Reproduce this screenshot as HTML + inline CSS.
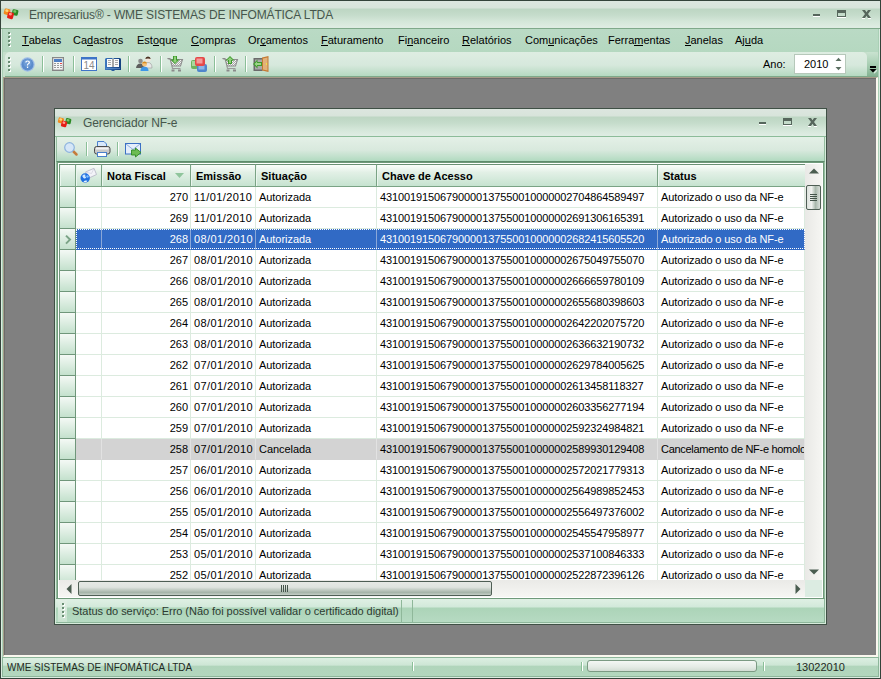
<!DOCTYPE html>
<html><head><meta charset="utf-8">
<style>
*{box-sizing:border-box;margin:0;padding:0}
html,body{width:881px;height:679px;overflow:hidden;background:#c6dfcc;font-family:"Liberation Sans",sans-serif;font-size:11px;color:#000}
.a{position:absolute}
svg{position:absolute;overflow:visible}
#frame{position:absolute;left:0;top:0;width:881px;height:679px;border:1px solid #34433a;box-shadow:inset 1px 1px 0 #dcece1,inset -1px -1px 0 #dcece1,inset 2px 2px 0 #a9cfb5,inset -2px -2px 0 #a9cfb5}
.tb{background:linear-gradient(#dce6df 0,#d8e4db 7px,#bdd6c3 8px,#c5dccb 14px,#d3e6d8 20px,#deece2 26px)}
#title{position:absolute;left:1px;top:1px;width:879px;height:28px;border-bottom:1px solid #7fa98a}
#title .t{position:absolute;left:28px;top:7px;font-size:12px;color:#46564c;letter-spacing:-0.13px}
#menubar{position:absolute;left:3px;top:29px;width:875px;height:23px;background:linear-gradient(#badac5,#b5d8c0)}
.mi{position:absolute;top:5px;font-size:11px;color:#000;white-space:nowrap}
.mi u{text-decoration:none;border-bottom:1px solid #000;line-height:10px;display:inline-block}
.grip{position:absolute;width:3px;height:15px}.grip i{position:absolute;left:0;width:2px;height:2px;background:#6a8e73;box-shadow:1px 1px 0 #fff}.grip i:nth-child(1){top:0}.grip i:nth-child(2){top:4px}.grip i:nth-child(3){top:8px}.grip i:nth-child(4){top:12px}
#toolbar{position:absolute;left:5px;top:52px;width:862px;height:25px;border-radius:5px 5px 0 0;background:linear-gradient(#deede2,#d6e8dc 55%,#b5d9c1);border-bottom:1px solid #7fa98a}
.sep{position:absolute;width:2px;border-left:1px solid #8bbf98;border-right:1px solid #fff}
#mdi{position:absolute;left:3px;top:77px;width:875px;height:580px;background:#808080;box-shadow:inset 1px 1px 0 #6c6c6a;border-top:1px solid #a59c89;border-left:1px solid #a59c89;border-bottom:2px solid #faf8ef;border-right:2px solid #faf8ef}
#status{position:absolute;left:2px;top:657px;width:877px;height:20px;background:linear-gradient(#dcefe2,#cde6d5 40%,#b0d5bb 45%,#b3d7be);border:1px solid #8db69a}
#child{position:absolute;left:54px;top:108px;width:773px;height:517px;border:1px solid #3f5045;background:#94bd9f;box-shadow:inset 1px 1px 0 #d6eadb,inset -1px -1px 0 #d6eadb}
#ctitle{position:absolute;left:55px;top:109px;width:771px;height:28px;border-bottom:1px solid #8cbc99}
#ctitle .t{position:absolute;left:28px;top:7px;font-size:12px;color:#46564c;letter-spacing:-0.1px}
#ctool{position:absolute;left:56px;top:137px;width:769px;height:25px;background:linear-gradient(#e4f0e7,#d8e9dd 55%,#b1dac0);border-bottom:1px solid #5f8a6c;border-left:1px solid #94bd9f;border-right:1px solid #94bd9f}
#grid{position:absolute;left:57px;top:162px;width:767px;height:437px;background:#fff;border:1px solid #6f9a7a;box-shadow:inset 0 0 0 1px #fff;overflow:hidden}
.hdr{position:absolute;top:164px;height:23px;background:linear-gradient(#fbfdfb,#e2f0e6 35%,#c6e3d0);border-top:1px solid #6a9074;border-right:1px solid #7aa385;border-bottom:1px solid #7aa385;box-shadow:inset 1px 0 0 #eaf6ee;font-weight:bold;padding:5px 0 0 5px;color:#000;white-space:nowrap}
#rows{position:absolute;left:59px;top:187px;width:746px;height:393px;overflow:hidden}
.row{position:absolute;left:0;width:746px;height:21px}
.row .c{position:absolute;top:0;height:21px;border-right:1px solid #dcebdf;border-bottom:1px solid #dcebdf;padding:4px 0 0 3px;white-space:nowrap;overflow:hidden;letter-spacing:-0.05px}
.ind{position:absolute;left:0;top:0;width:17px;height:21px;background:linear-gradient(#f4f9f5,#c4e1cd);border-left:1px solid #6f967a;border-right:1px solid #6f967a;border-bottom:1px solid #6f967a}
.c1{left:17px;width:26px}
.c2{left:43px;width:89px;text-align:right;padding:4px 2px 0 0!important}
.c3{left:132px;width:65px;letter-spacing:0.4px!important}
.c4{left:197px;width:121px}
.c5{left:318px;width:281px;letter-spacing:-0.11px!important}
.c6{left:599px;width:147px;letter-spacing:-0.12px!important}
.sel .c{background:#316ac5;color:#fff;border-right-color:#8aa7d8;border-bottom-color:#316ac5}
.sel .focus{position:absolute;left:17px;top:0;width:729px;height:20px;border:1px dotted #fff}
.canc .c{background:#d3d3d3;border-right-color:#e2e2e2;border-bottom-color:#d3d3d3}.canc .c6{letter-spacing:-0.3px!important}
#vscroll{position:absolute;left:805px;top:164px;width:17px;height:416px;background:linear-gradient(90deg,#e9e9e6,#f6f6f3)}
#hscroll{position:absolute;left:59px;top:580px;width:746px;height:17px;background:linear-gradient(#eaeae7,#f6f6f3)}
.thumbv{position:absolute;border:1px solid #4e5e54;border-radius:2px;background:linear-gradient(90deg,#dde2dd,#f0f2ef 35%,#a9b8ac 65%,#d9e0da)}
.thumbh{position:absolute;border:1px solid #4e5e54;border-radius:2px;background:linear-gradient(#e6e9e5,#dfe4df 40%,#a5b4a8 80%,#c4cec6)}
#cstatus{position:absolute;left:56px;top:598px;width:769px;height:25px;background:linear-gradient(#dff0e4 0,#d2e9da 8px,#acd4b8 9px,#b6dac2 100%);border-top:1px solid #6f9a7a;border-bottom:1px solid #8db69a;border-right:1px solid #8db69a}
.stxt{position:absolute;color:#2c3a31;white-space:nowrap}
</style></head><body>
<div id="frame"></div>
<div id="title" class="tb">
<svg style="left:3px;top:7px" width="15" height="12" viewBox="0 0 15 12"><g transform="rotate(12 11 5)"><rect x="8" y="1.5" width="6" height="6" rx="1.3" fill="#2b8a24"/><rect x="9" y="2.3" width="3" height="2.5" rx="1" fill="#7cc46a"/></g><g transform="rotate(15 3 4)"><rect x="0" y="0.8" width="6" height="6" rx="1.3" fill="#f28a1c"/><rect x="1" y="1.5" width="3" height="2.5" rx="1" fill="#ffd27a"/></g><g transform="rotate(15 6.5 7.5)"><rect x="3.5" y="4.3" width="6" height="6.5" rx="1.3" fill="#e51c16"/><rect x="4.5" y="5" width="3" height="2.5" rx="1" fill="#ff9a8a"/></g></svg>
<div class="t">Empresarius® - WME SISTEMAS DE INFOMÁTICA LTDA</div>
<div class="a" style="left:812px;top:13px;width:7px;height:2px;background:#56665c;box-shadow:0 1px 0 #fff"></div>
<div class="a" style="left:836px;top:9px;width:9px;height:7px;border:1px solid #56665c;border-top-width:3px;box-shadow:0 1px 0 #fff"></div>
<svg style="left:861px;top:9px" width="9" height="9" viewBox="0 0 9 9"><path d="M0 0h3l1.5 2.2L6 0h3L6 4l3 4H6L4.5 5.8L3 8H0l3-4z" fill="#56665c"/><path d="M0 8h3v1H0zM6 8h3v1H6z" fill="#fff"/></svg>
</div>
<div id="menubar">
<div class="grip" style="left:5px;top:3px"><i></i><i></i><i></i><i></i></div>
<div class="mi" style="left:19px"><u>T</u>abelas</div>
<div class="mi" style="left:70px">Ca<u>d</u>astros</div>
<div class="mi" style="left:134px">Est<u>o</u>que</div>
<div class="mi" style="left:188px"><u>C</u>ompras</div>
<div class="mi" style="left:245px">Or<u>ç</u>amentos</div>
<div class="mi" style="left:318px"><u>F</u>aturamento</div>
<div class="mi" style="left:395px">Fi<u>n</u>anceiro</div>
<div class="mi" style="left:459px"><u>R</u>elatórios</div>
<div class="mi" style="left:522px">Com<u>u</u>nicações</div>
<div class="mi" style="left:605px">Ferra<u>m</u>entas</div>
<div class="mi" style="left:682px"><u>J</u>anelas</div>
<div class="mi" style="left:732px">Aj<u>u</u>da</div>
</div>
<div id="toolbar">
<div class="grip" style="left:3px;top:5px"><i></i><i></i><i></i><i></i></div>
</div>
<!-- toolbar icons (page coords) -->
<svg style="left:20px;top:57px" width="15" height="15" viewBox="0 0 15 15"><circle cx="7.5" cy="7.5" r="7.2" fill="#9fbde6"/><circle cx="7.5" cy="7.5" r="6" fill="#5b8ccc"/><circle cx="7.5" cy="6" r="4" fill="#7aa5dc" opacity="0.6"/><path d="M5.2 5.6 Q5.2 3.4 7.6 3.4 Q10 3.4 10 5.4 Q10 6.6 8.6 7.2 Q8 7.6 8 8.6 L6.9 8.6 Q6.9 7 7.9 6.4 Q8.7 6 8.7 5.4 Q8.7 4.5 7.6 4.5 Q6.5 4.5 6.5 5.6Z" fill="#fff"/><rect x="6.9" y="9.6" width="1.3" height="1.4" fill="#fff"/></svg>
<div class="sep" style="left:42px;top:56px;height:16px"></div>
<svg style="left:52px;top:57px" width="12" height="14" viewBox="0 0 12 14"><rect x="0.5" y="0.5" width="11" height="13" fill="#f6f6f6" stroke="#858585"/><rect x="0.5" y="0.5" width="11" height="13" fill="none" stroke="#9a9a9a" stroke-width="0.6" transform="translate(0.6 0.6) scale(0.9)"/><rect x="2" y="2" width="8" height="3" fill="#4f7fc4"/><g fill="#9a9a9a"><rect x="2" y="6" width="2" height="1"/><rect x="5" y="6" width="2" height="1"/><rect x="8" y="6" width="2" height="1" fill="#e04848"/><rect x="2" y="8" width="2" height="1"/><rect x="5" y="8" width="2" height="1"/><rect x="8" y="8" width="2" height="1"/><rect x="2" y="10" width="2" height="1"/><rect x="5" y="10" width="2" height="1"/><rect x="8" y="10" width="2" height="1"/></g></svg>
<div class="sep" style="left:73px;top:56px;height:16px"></div>
<svg style="left:81px;top:57px" width="16" height="14" viewBox="0 0 16 14"><rect x="0.5" y="0.5" width="15" height="13" fill="#fff" stroke="#3f74c8"/><rect x="0.5" y="0.5" width="15" height="2" fill="#3f74c8"/><text x="8" y="12" text-anchor="middle" font-family="Liberation Sans" font-size="10" fill="#8a8a8a">14</text></svg>
<svg style="left:105px;top:58px" width="16" height="14" viewBox="0 0 16 14"><defs><linearGradient id="bk" x1="0" x2="1"><stop offset="0" stop-color="#3d78c0"/><stop offset="1" stop-color="#14407f"/></linearGradient></defs><path d="M1 0 L7 0 L8 1 L9 0 L15 0 L16 1 L16 12 L10 12 L9 13 L7 13 L6 12 L0 12 L0 1Z" fill="url(#bk)"/><rect x="2" y="1" width="12" height="8" fill="#fbfbfb"/><rect x="7" y="1" width="2" height="8" fill="#a8a8a8"/><g fill="#a9a9a9"><rect x="3" y="2" width="3" height="1"/><rect x="3" y="4" width="3" height="1"/><rect x="3" y="6" width="3" height="1"/><rect x="10" y="2" width="3" height="1"/><rect x="10" y="4" width="3" height="1"/><rect x="10" y="6" width="3" height="1"/></g><rect x="1" y="10" width="14" height="1" fill="#6f9bd4" opacity="0.6"/></svg>
<div class="sep" style="left:128px;top:56px;height:16px"></div>
<svg style="left:136px;top:56px" width="17" height="15" viewBox="0 0 17 15"><circle cx="4.5" cy="5" r="2.3" fill="#8c8c8c"/><path d="M0 12 Q0.5 7.5 4.5 7.5 Q8 7.5 8 12Z" fill="#5e5e5e"/><circle cx="12" cy="3.5" r="2.6" fill="#f2e6dc"/><path d="M9.3 3 Q9.5 0.5 12 0.5 Q14.5 0.5 14.7 3 Q12 1.8 9.3 3Z" fill="#4a3020"/><path d="M8 12 Q8 6.5 12 6.5 Q16 6.5 16 12Z" fill="#e8e8e8" stroke="#999" stroke-width="0.6"/><circle cx="8.5" cy="8.2" r="2.4" fill="#f5c27a"/><path d="M6 7.6 Q6.5 5.4 8.5 5.4 Q10.7 5.4 11 7.6 Q8.5 6.8 6 7.6Z" fill="#d98a22"/><path d="M4.5 15 Q4.5 10.8 8.5 10.8 Q12.5 10.8 12.5 15Z" fill="#3d96e8"/></svg>
<div class="sep" style="left:160px;top:56px;height:16px"></div>
<svg style="left:167px;top:56px" width="16" height="16" viewBox="0 0 16 16"><defs><pattern id="mesh" width="2" height="2" patternUnits="userSpaceOnUse"><rect width="2" height="2" fill="#f4f4f4"/><rect width="1" height="1" fill="#a8a8a8"/><rect x="1" y="1" width="1" height="1" fill="#a8a8a8"/></pattern></defs><path d="M0.5 2.5 L3 2.5 L5 10 L13.5 10 L15.5 3.5 L3.5 3.5Z" fill="url(#mesh)" stroke="#8c8c8c" stroke-width="1.1"/><path d="M5 10 L5.5 12.5 L13.5 12.5" fill="none" stroke="#9a9a9a" stroke-width="1.2"/><rect x="4.5" y="13.5" width="3" height="2" fill="#8a8a8a"/><rect x="11" y="13.5" width="3" height="2" fill="#8a8a8a"/><path d="M6 0 L10 0 L10 3.5 L12.5 3.5 L8 8 L3.5 3.5 L6 3.5Z" fill="#3f9a2c"/><path d="M7 0.5 L9 0.5 L9 4.5 L10.5 4.5 L8 7 L5.5 4.5 L7 4.5Z" fill="#8ed07a"/></svg>
<svg style="left:190px;top:56px" width="18" height="16" viewBox="0 0 18 16"><rect x="1" y="4" width="7" height="9" rx="2" fill="#6fb35e"/><rect x="2" y="5" width="4" height="5" fill="#a9d79d"/><rect x="7" y="8" width="10" height="8" rx="2" fill="#4f86cc"/><rect x="8.5" y="9.5" width="6" height="4" fill="#8fb5e6"/><rect x="5" y="1" width="10" height="9" rx="2" fill="#e54848"/><rect x="6.5" y="2.5" width="6" height="5" fill="#f59a9a"/></svg>
<div class="sep" style="left:214px;top:56px;height:16px"></div>
<svg style="left:222px;top:56px" width="16" height="16" viewBox="0 0 16 16"><defs><pattern id="mesh2" width="2" height="2" patternUnits="userSpaceOnUse"><rect width="2" height="2" fill="#f4f4f4"/><rect width="1" height="1" fill="#a8a8a8"/><rect x="1" y="1" width="1" height="1" fill="#a8a8a8"/></pattern></defs><path d="M0.5 2.5 L3 2.5 L5 10 L13.5 10 L15.5 3.5 L3.5 3.5Z" fill="url(#mesh2)" stroke="#8c8c8c" stroke-width="1.1"/><path d="M5 10 L5.5 12.5 L13.5 12.5" fill="none" stroke="#9a9a9a" stroke-width="1.2"/><rect x="4.5" y="13.5" width="3" height="2" fill="#8a8a8a"/><rect x="11" y="13.5" width="3" height="2" fill="#8a8a8a"/><path d="M8 0 L12.5 4.5 L10 4.5 L10 8 L6 8 L6 4.5 L3.5 4.5Z" fill="#3f9a2c"/><path d="M8 1.2 L10.8 4 L9 4 L9 7 L7 7 L7 4 L5.2 4Z" fill="#8ed07a"/></svg>
<div class="sep" style="left:245px;top:56px;height:16px"></div>
<svg style="left:253px;top:56px" width="16" height="16" viewBox="0 0 16 16"><rect x="0.5" y="2" width="9" height="13" fill="#6b6b6b"/><rect x="2" y="3.5" width="7" height="10" fill="#a9a9a9"/><path d="M9 1.5 L15.5 0 L15.5 16 L9 14.5Z" fill="#c47a33"/><path d="M10 2.5 L14.5 1.5 L14.5 14.5 L10 13.5Z" fill="#e2b27a"/><rect x="13" y="7" width="1" height="2" fill="#f6e046"/><path d="M0 8 L4.5 3.5 L4.5 6 L9 6 L9 10 L4.5 10 L4.5 12.5Z" fill="#3f9a2c"/><path d="M1.5 8 L4 5.5 L4 7 L8 7 L8 9 L4 9 L4 10.5Z" fill="#9bd588"/></svg>
<div class="a" style="left:763px;top:58px;font-size:11px;color:#000">Ano:</div>
<div class="a" style="left:794px;top:54px;width:52px;height:20px;background:#fff;border:1px solid #b6c8ba"></div>
<div class="a" style="left:804px;top:58px;font-size:11px">2010</div>
<svg style="left:835px;top:57px" width="7" height="15" viewBox="0 0 7 15"><path d="M0.5 4 L3.5 0.8 L6.5 4Z" fill="#5a6e60"/><path d="M0.5 10 L3.5 13.2 L6.5 10Z" fill="#5a6e60"/></svg>
<div class="a" style="left:867px;top:52px;width:11px;height:25px;border-radius:0 5px 0 0;background:linear-gradient(#c9e3d0,#a9cfb4 50%,#84b292);border-bottom:1px solid #7fa98a"></div>
<svg style="left:869px;top:65px" width="9" height="9" viewBox="0 0 9 9"><rect x="1" y="1" width="6" height="2" fill="#000"/><path d="M0.5 4 L7.5 4 L4 7.5Z" fill="#000"/><path d="M4.5 8 L8 4.5 L8 6 L5.5 8.5Z" fill="#fff" opacity="0.8"/></svg>
<div id="mdi"></div>
<div id="status">
<div class="stxt" style="left:4px;top:3px;color:#1f2a23;transform:scaleX(0.905);transform-origin:0 0">WME SISTEMAS DE INFOMÁTICA LTDA</div>
<div class="sep" style="left:409px;top:4px;height:9px"></div><div class="sep" style="left:578px;top:4px;height:9px"></div>
<div class="a" style="left:584px;top:2px;width:170px;height:12px;border:1px solid #7b9a83;border-radius:3px;background:linear-gradient(#f4f7f4,#e4ebe5 60%,#d2ddd4)"></div>
<div class="sep" style="left:760px;top:4px;height:9px"></div>
<div class="stxt" style="left:793px;top:3px;color:#1f2a23">13022010</div>
</div>
<div id="child"></div>
<div id="ctitle" class="tb">
<svg style="left:3px;top:8px" width="14" height="11" viewBox="0 0 15 12"><g transform="rotate(12 11 5)"><rect x="8" y="1.5" width="6" height="6" rx="1.3" fill="#2b8a24"/><rect x="9" y="2.3" width="3" height="2.5" rx="1" fill="#7cc46a"/></g><g transform="rotate(15 3 4)"><rect x="0" y="0.8" width="6" height="6" rx="1.3" fill="#f28a1c"/><rect x="1" y="1.5" width="3" height="2.5" rx="1" fill="#ffd27a"/></g><g transform="rotate(15 6.5 7.5)"><rect x="3.5" y="4.3" width="6" height="6.5" rx="1.3" fill="#e51c16"/><rect x="4.5" y="5" width="3" height="2.5" rx="1" fill="#ff9a8a"/></g></svg>
<div class="t">Gerenciador NF-e</div>
<div class="a" style="left:704px;top:13px;width:7px;height:2px;background:#56665c;box-shadow:0 1px 0 #fff"></div>
<div class="a" style="left:728px;top:9px;width:9px;height:7px;border:1px solid #56665c;border-top-width:3px;box-shadow:0 1px 0 #fff"></div>
<svg style="left:753px;top:9px" width="9" height="9" viewBox="0 0 9 9"><path d="M0 0h3l1.5 2.2L6 0h3L6 4l3 4H6L4.5 5.8L3 8H0l3-4z" fill="#56665c"/><path d="M0 8h3v1H0zM6 8h3v1H6z" fill="#fff"/></svg>
</div>
<div id="ctool">
</div>
<svg style="left:64px;top:142px" width="14" height="14" viewBox="0 0 14 14"><path d="M8 8 L12.5 12.5" stroke="#c57b3b" stroke-width="2.5" stroke-linecap="round"/><circle cx="5.5" cy="5.5" r="4.8" fill="#d5e6f7" stroke="#8db3de" stroke-width="1.2"/></svg>
<div class="sep" style="left:86px;top:142px;height:14px"></div>
<svg style="left:94px;top:141px" width="17" height="16" viewBox="0 0 17 16"><path d="M3.5 0.5 L10 0.5 L12.5 3 L12.5 7 L3.5 7Z" fill="#d7e7fa" stroke="#4a80cc"/><rect x="0.5" y="5.5" width="15.5" height="7.5" rx="2.2" fill="#c9c9c9" stroke="#4a4a4a"/><rect x="2" y="6.5" width="12.5" height="2" fill="#f2f2f2"/><rect x="3.5" y="11.5" width="9" height="4" fill="#fff" stroke="#4a80cc"/></svg>
<div class="sep" style="left:117px;top:142px;height:14px"></div>
<svg style="left:125px;top:143px" width="17" height="14" viewBox="0 0 17 14"><rect x="0.5" y="0.5" width="15" height="10.5" fill="#e4eefb" stroke="#3b70c4"/><path d="M1 1 L8 6.5 L15 1" fill="none" stroke="#8fb0de" stroke-width="1"/><path d="M6.5 7 L10.5 7 L10.5 5 L16 9.5 L10.5 14 L10.5 12 L6.5 12Z" fill="#6cbc52" stroke="#2f8a22" stroke-width="0.9"/></svg>
<div id="grid"></div>
<div class="hdr" style="left:59px;width:17px;border-left:1px solid #6f9a7a"></div>
<div class="hdr" style="left:76px;width:26px"><svg style="left:4px;top:3px" width="17" height="15" viewBox="0 0 17 15"><path d="M5.5 4 L14 0.3 L16.5 6.5 L8 10.5Z" fill="#f3f3f8" stroke="#b4b4c4" stroke-width="0.8"/><path d="M5.5 4 L11.5 5.5 L14 0.3" fill="none" stroke="#d0d0dc" stroke-width="0.7"/><circle cx="5.2" cy="10" r="4.7" fill="#1f6fe0"/><path d="M2.2 8 Q3.5 6 5.5 6.8 Q4.5 8.5 6.2 9.2 Q5.5 11 4 10.5 Q3 9.5 2.2 8Z" fill="#cfe8ff"/><path d="M3.5 13.5 Q5 12.2 7.5 12.8 Q6.5 14.5 5 14.6Z" fill="#e6f3ff"/><circle cx="7.5" cy="8.5" r="1.2" fill="#7fc0ff"/></svg></div>
<div class="hdr" style="left:102px;width:89px">Nota Fiscal<svg style="left:73px;top:8px" width="9" height="5" viewBox="0 0 9 5"><path d="M0 0 L9 0 L4.5 5Z" fill="#8fc59c"/></svg></div>
<div class="hdr" style="left:191px;width:65px">Emissão</div>
<div class="hdr" style="left:256px;width:121px">Situação</div>
<div class="hdr" style="left:377px;width:281px">Chave de Acesso</div>
<div class="hdr" style="left:658px;width:147px;border-right:none">Status</div>
<div id="rows">
<div class="row" style="top:0px"><div class="ind"></div><div class="c c1"></div><div class="c c2">270</div><div class="c c3">11/01/2010</div><div class="c c4">Autorizada</div><div class="c c5">43100191506790000137550010000002704864589497</div><div class="c c6">Autorizado o uso da NF-e</div></div>
<div class="row" style="top:21px"><div class="ind"></div><div class="c c1"></div><div class="c c2">269</div><div class="c c3">11/01/2010</div><div class="c c4">Autorizada</div><div class="c c5">43100191506790000137550010000002691306165391</div><div class="c c6">Autorizado o uso da NF-e</div></div>
<div class="row sel" style="top:42px"><div class="ind"><svg style="left:5px;top:6px" width="7" height="10" viewBox="0 0 7 10"><path d="M1 0.6 L5 4.6 L1 8.6" stroke="#7aa386" stroke-width="2" fill="none"/></svg></div><div class="c c1"></div><div class="c c2">268</div><div class="c c3">08/01/2010</div><div class="c c4">Autorizada</div><div class="c c5">43100191506790000137550010000002682415605520</div><div class="c c6">Autorizado o uso da NF-e</div><div class="focus"></div></div>
<div class="row" style="top:63px"><div class="ind"></div><div class="c c1"></div><div class="c c2">267</div><div class="c c3">08/01/2010</div><div class="c c4">Autorizada</div><div class="c c5">43100191506790000137550010000002675049755070</div><div class="c c6">Autorizado o uso da NF-e</div></div>
<div class="row" style="top:84px"><div class="ind"></div><div class="c c1"></div><div class="c c2">266</div><div class="c c3">08/01/2010</div><div class="c c4">Autorizada</div><div class="c c5">43100191506790000137550010000002666659780109</div><div class="c c6">Autorizado o uso da NF-e</div></div>
<div class="row" style="top:105px"><div class="ind"></div><div class="c c1"></div><div class="c c2">265</div><div class="c c3">08/01/2010</div><div class="c c4">Autorizada</div><div class="c c5">43100191506790000137550010000002655680398603</div><div class="c c6">Autorizado o uso da NF-e</div></div>
<div class="row" style="top:126px"><div class="ind"></div><div class="c c1"></div><div class="c c2">264</div><div class="c c3">08/01/2010</div><div class="c c4">Autorizada</div><div class="c c5">43100191506790000137550010000002642202075720</div><div class="c c6">Autorizado o uso da NF-e</div></div>
<div class="row" style="top:147px"><div class="ind"></div><div class="c c1"></div><div class="c c2">263</div><div class="c c3">08/01/2010</div><div class="c c4">Autorizada</div><div class="c c5">43100191506790000137550010000002636632190732</div><div class="c c6">Autorizado o uso da NF-e</div></div>
<div class="row" style="top:168px"><div class="ind"></div><div class="c c1"></div><div class="c c2">262</div><div class="c c3">07/01/2010</div><div class="c c4">Autorizada</div><div class="c c5">43100191506790000137550010000002629784005625</div><div class="c c6">Autorizado o uso da NF-e</div></div>
<div class="row" style="top:189px"><div class="ind"></div><div class="c c1"></div><div class="c c2">261</div><div class="c c3">07/01/2010</div><div class="c c4">Autorizada</div><div class="c c5">43100191506790000137550010000002613458118327</div><div class="c c6">Autorizado o uso da NF-e</div></div>
<div class="row" style="top:210px"><div class="ind"></div><div class="c c1"></div><div class="c c2">260</div><div class="c c3">07/01/2010</div><div class="c c4">Autorizada</div><div class="c c5">43100191506790000137550010000002603356277194</div><div class="c c6">Autorizado o uso da NF-e</div></div>
<div class="row" style="top:231px"><div class="ind"></div><div class="c c1"></div><div class="c c2">259</div><div class="c c3">07/01/2010</div><div class="c c4">Autorizada</div><div class="c c5">43100191506790000137550010000002592324984821</div><div class="c c6">Autorizado o uso da NF-e</div></div>
<div class="row canc" style="top:252px"><div class="ind"></div><div class="c c1"></div><div class="c c2">258</div><div class="c c3">07/01/2010</div><div class="c c4">Cancelada</div><div class="c c5">43100191506790000137550010000002589930129408</div><div class="c c6">Cancelamento de NF-e homologado</div></div>
<div class="row" style="top:273px"><div class="ind"></div><div class="c c1"></div><div class="c c2">257</div><div class="c c3">06/01/2010</div><div class="c c4">Autorizada</div><div class="c c5">43100191506790000137550010000002572021779313</div><div class="c c6">Autorizado o uso da NF-e</div></div>
<div class="row" style="top:294px"><div class="ind"></div><div class="c c1"></div><div class="c c2">256</div><div class="c c3">06/01/2010</div><div class="c c4">Autorizada</div><div class="c c5">43100191506790000137550010000002564989852453</div><div class="c c6">Autorizado o uso da NF-e</div></div>
<div class="row" style="top:315px"><div class="ind"></div><div class="c c1"></div><div class="c c2">255</div><div class="c c3">05/01/2010</div><div class="c c4">Autorizada</div><div class="c c5">43100191506790000137550010000002556497376002</div><div class="c c6">Autorizado o uso da NF-e</div></div>
<div class="row" style="top:336px"><div class="ind"></div><div class="c c1"></div><div class="c c2">254</div><div class="c c3">05/01/2010</div><div class="c c4">Autorizada</div><div class="c c5">43100191506790000137550010000002545547958977</div><div class="c c6">Autorizado o uso da NF-e</div></div>
<div class="row" style="top:357px"><div class="ind"></div><div class="c c1"></div><div class="c c2">253</div><div class="c c3">05/01/2010</div><div class="c c4">Autorizada</div><div class="c c5">43100191506790000137550010000002537100846333</div><div class="c c6">Autorizado o uso da NF-e</div></div>
<div class="row" style="top:378px"><div class="ind"></div><div class="c c1"></div><div class="c c2">252</div><div class="c c3">05/01/2010</div><div class="c c4">Autorizada</div><div class="c c5">43100191506790000137550010000002522872396126</div><div class="c c6">Autorizado o uso da NF-e</div></div>
</div>
<div id="vscroll">
<svg style="left:4px;top:4px" width="10" height="6" viewBox="0 0 10 6"><path d="M0 5.5 L5 0.5 L10 5.5Z" fill="#4a5d50"/></svg>
<div class="thumbv" style="left:1px;top:21px;width:15px;height:25px"></div>
<svg style="left:5px;top:30px" width="7" height="7" viewBox="0 0 7 7"><path d="M0 0.5h7M0 2.5h7M0 4.5h7M0 6.5h7" stroke="#44544a"/></svg>
<svg style="left:4px;top:405px" width="10" height="6" viewBox="0 0 10 6"><path d="M0 0.5 L5 5.5 L10 0.5Z" fill="#4a5d50"/></svg>
</div>
<div id="hscroll">
<svg style="left:7px;top:4px" width="6" height="10" viewBox="0 0 6 10"><path d="M5.5 0 L0.5 5 L5.5 10Z" fill="#4a5d50"/></svg>
<div class="thumbh" style="left:19px;top:1px;width:414px;height:15px"></div>
<svg style="left:222px;top:5px" width="7" height="7" viewBox="0 0 7 7"><path d="M0.5 0v7M2.5 0v7M4.5 0v7M6.5 0v7" stroke="#44544a"/></svg>
<svg style="left:736px;top:4px" width="6" height="10" viewBox="0 0 6 10"><path d="M0.5 0 L5.5 5 L0.5 10Z" fill="#4a5d50"/></svg>
</div>
<div class="a" style="left:805px;top:580px;width:17px;height:17px;background:#dcece2"></div>
<div id="cstatus">
<div class="a" style="left:2px;top:1px;width:9px;height:22px;background:linear-gradient(#e2efe5,#c8e2cf)"></div>
<div class="grip" style="left:6px;top:4px"><i></i><i></i><i></i><i></i></div>
<div class="stxt" style="left:16px;top:6px;letter-spacing:-0.04px">Status do serviço: Erro (Não foi possível validar o certificado digital)</div>
<div class="a" style="left:345px;top:1px;width:1px;height:22px;background:#8fb89a"></div>
<div class="a" style="left:356px;top:1px;width:1px;height:22px;background:#8fb89a"></div>
</div>
</body></html>
